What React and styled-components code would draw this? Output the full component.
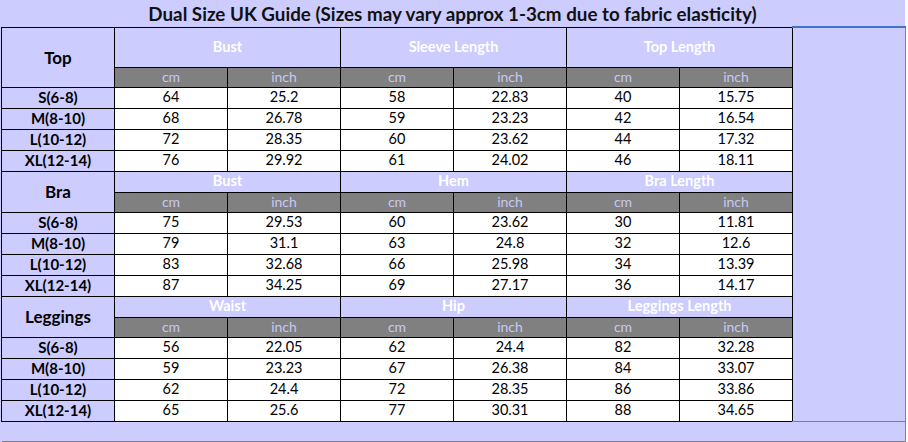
import React from "react";
import styled, { createGlobalStyle } from "styled-components";

const GlobalStyle = createGlobalStyle`
  html, body {
    margin: 0;
    padding: 0;
    background: #ffffff;
  }
  body {
    font-family: Lato, "Open Sans", sans-serif;
  }
`;

const Page = styled.div`
  width: 905px;
  background: #ccccff;
`;

const Title = styled.div`
  height: 26px;
  line-height: 28px;
  text-align: center;
  font-size: 18.8px;
  font-weight: 700;
  color: #111;
  white-space: nowrap;
`;

const Grid = styled.table`
  margin-left: 1px;
  width: 904px;
  border-collapse: collapse;
  table-layout: fixed;
  font-size: 14.5px;
  color: #000;
`;

const Row = styled.tr`
  height: ${(p) => p.$h}px;
`;

const Cell = styled.td`
  border: 1px solid #000;
  padding: 0;
  text-align: center;
  vertical-align: middle;
  line-height: 1;
  white-space: nowrap;
`;

const SectionLabel = styled(Cell)`
  background: #ccccff;
  font-weight: 700;
  font-size: 17px;
`;

const GroupHead = styled(Cell)`
  background: #ccccff;
  color: #ffffff;
  font-weight: 700;
  font-size: 14.5px;
`;

const UnitCell = styled(Cell)`
  background: #808080;
  color: #c8c8f4;
  font-size: 14px;
`;

const SizeCell = styled(Cell)`
  background: #ccccff;
  font-weight: 700;
  font-size: 15px;
`;

const ValueCell = styled(Cell)`
  background: #ffffff;
`;

const SideFill = styled.td`
  background: #ccccff;
  border-top: 2px solid #4472c4;
  border-right: 1px solid #808080;
  border-bottom: 1px solid #808080;
  padding: 0;
`;

const FootFill = styled.td`
  background: #ccccff;
  border-right: 1px solid #808080;
  border-bottom: 1px solid #808080;
  padding: 0;
`;

const sections = [
  {
    name: "Top",
    headH: 40,
    groups: ["Bust", "Sleeve Length", "Top Length"],
    rows: [
      ["S(6-8)", "64", "25.2", "58", "22.83", "40", "15.75"],
      ["M(8-10)", "68", "26.78", "59", "23.23", "42", "16.54"],
      ["L(10-12)", "72", "28.35", "60", "23.62", "44", "17.32"],
      ["XL(12-14)", "76", "29.92", "61", "24.02", "46", "18.11"],
    ],
  },
  {
    name: "Bra",
    headH: 21,
    groups: ["Bust", "Hem", "Bra Length"],
    rows: [
      ["S(6-8)", "75", "29.53", "60", "23.62", "30", "11.81"],
      ["M(8-10)", "79", "31.1", "63", "24.8", "32", "12.6"],
      ["L(10-12)", "83", "32.68", "66", "25.98", "34", "13.39"],
      ["XL(12-14)", "87", "34.25", "69", "27.17", "36", "14.17"],
    ],
  },
  {
    name: "Leggings",
    headH: 21,
    groups: ["Waist", "Hip", "Leggings Length"],
    rows: [
      ["S(6-8)", "56", "22.05", "62", "24.4", "82", "32.28"],
      ["M(8-10)", "59", "23.23", "67", "26.38", "84", "33.07"],
      ["L(10-12)", "62", "24.4", "72", "28.35", "86", "33.86"],
      ["XL(12-14)", "65", "25.6", "77", "30.31", "88", "34.65"],
    ],
  },
];

function Section({ data, first }) {
  return (
    <>
      <Row $h={data.headH}>
        <SectionLabel rowSpan={2}>{data.name}</SectionLabel>
        {data.groups.map((g) => (
          <GroupHead key={g} colSpan={2}>
            {g}
          </GroupHead>
        ))}
        {first && <SideFill rowSpan={18} />}
      </Row>
      <Row $h={20}>
        {data.groups.map((g) => (
          <React.Fragment key={g}>
            <UnitCell>cm</UnitCell>
            <UnitCell>inch</UnitCell>
          </React.Fragment>
        ))}
      </Row>
      {data.rows.map((r) => (
        <Row $h={21} key={r[0]}>
          <SizeCell>{r[0]}</SizeCell>
          {r.slice(1).map((v, i) => (
            <ValueCell key={i}>{v}</ValueCell>
          ))}
        </Row>
      ))}
    </>
  );
}

export default function App() {
  return (
    <Page>
      <GlobalStyle />
      <Title>
        Dual Size UK Guide (Sizes may vary approx 1-3cm due to fabric elasticity)
      </Title>
      <Grid>
        <colgroup>
          {Array.from({ length: 8 }).map((_, i) => (
            <col key={i} style={{ width: 113 }} />
          ))}
        </colgroup>
        <tbody>
          {sections.map((s, i) => (
            <Section key={s.name} data={s} first={i === 0} />
          ))}
          <Row $h={20}>
            <FootFill colSpan={8} />
          </Row>
        </tbody>
      </Grid>
    </Page>
  );
}
